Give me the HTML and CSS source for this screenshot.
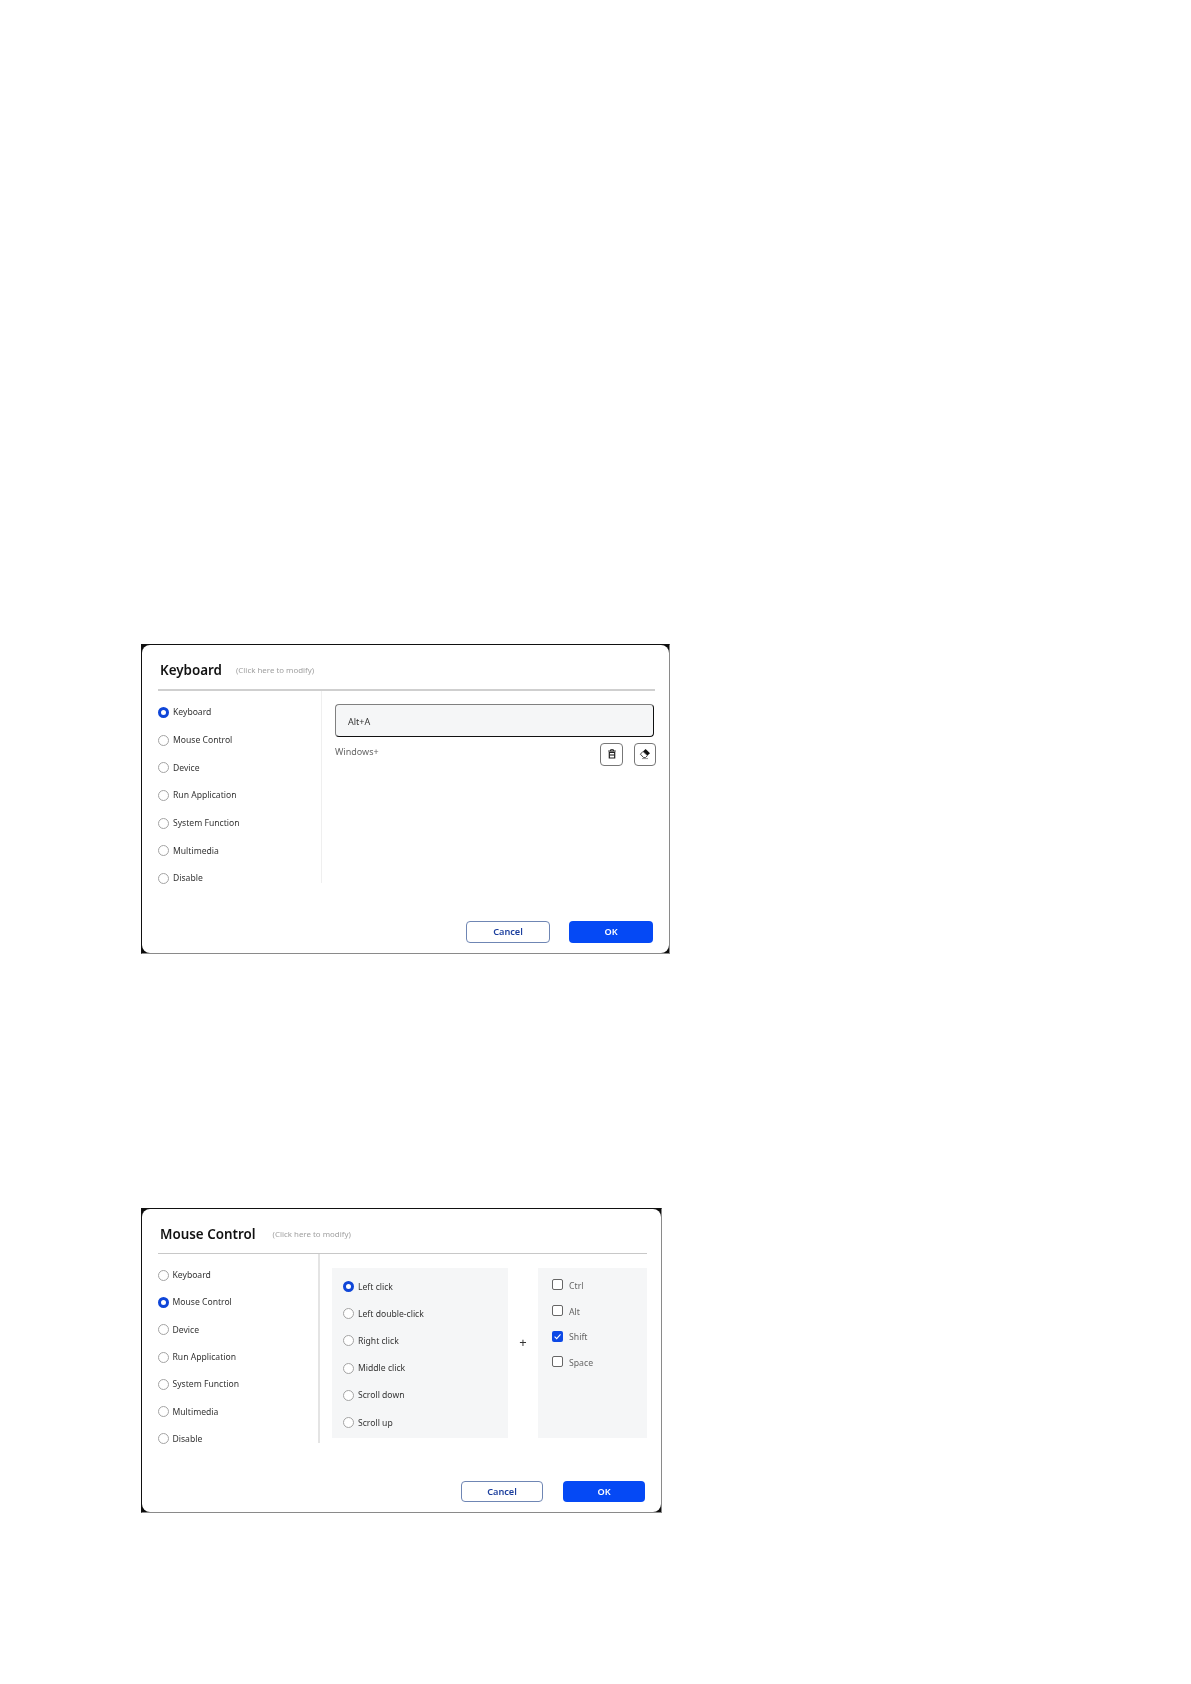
FILE: index.html
```html
<!DOCTYPE html>
<html lang="en">
<head>
<meta charset="utf-8">
<title>Keyboard and Mouse Control</title>
<link rel="stylesheet" href="styles.css">
</head>
<body>
<main class="page">
  <section class="frame frame-keyboard">
    <div class="dialog">
      <header class="head">
        <h2 class="title">Keyboard</h2>
        <span class="hint">(Click here to modify)</span>
      </header>
      <div class="body">
        <ul class="options nav">
          <li class="option"><i class="radio on"></i>Keyboard</li>
          <li class="option"><i class="radio"></i>Mouse Control</li>
          <li class="option"><i class="radio"></i>Device</li>
          <li class="option"><i class="radio"></i>Run Application</li>
          <li class="option"><i class="radio"></i>System Function</li>
          <li class="option"><i class="radio"></i>Multimedia</li>
          <li class="option"><i class="radio"></i>Disable</li>
        </ul>
        <div class="content">
          <div class="shortcut">Alt+A</div>
          <div class="tools">
            <span class="winkey">Windows+</span>
            <button class="tool" type="button" aria-label="Delete">
              <svg viewBox="0 0 12 12" width="12" height="12"><path d="M2.2 3h7.6M4.6 3V1.7h2.8V3" fill="none" stroke="#222" stroke-width="1"/><path d="M3.3 4.4h5.4V10H3.3z" fill="none" stroke="#222" stroke-width="1.2"/><path d="M3.6 7h4.8" stroke="#222" stroke-width="1.1"/></svg>
            </button>
            <button class="tool tool-erase" type="button" aria-label="Clear">
              <svg viewBox="0 0 12 12" width="12" height="12"><path d="M6.6 1 11 5.2 8.4 7.6 4 3.4z" fill="#111"/><path d="M4 3.4 8.4 7.6 6.4 9.6H4.6L1.4 6.2z" fill="#fff" stroke="#333" stroke-width=".9"/><path d="M3 10.6h6" stroke="#777" stroke-width=".8"/></svg>
            </button>
          </div>
        </div>
      </div>
      <footer class="foot">
        <button class="btn btn-ghost" type="button">Cancel</button>
        <button class="btn btn-primary" type="button">OK</button>
      </footer>
    </div>
  </section>

  <section class="frame frame-mouse">
    <div class="dialog">
      <header class="head">
        <h2 class="title">Mouse Control</h2>
        <span class="hint">(Click here to modify)</span>
      </header>
      <div class="body">
        <ul class="options nav">
          <li class="option"><i class="radio"></i>Keyboard</li>
          <li class="option"><i class="radio on"></i>Mouse Control</li>
          <li class="option"><i class="radio"></i>Device</li>
          <li class="option"><i class="radio"></i>Run Application</li>
          <li class="option"><i class="radio"></i>System Function</li>
          <li class="option"><i class="radio"></i>Multimedia</li>
          <li class="option"><i class="radio"></i>Disable</li>
        </ul>
        <div class="content">
          <ul class="options panel clicks">
            <li class="option"><i class="radio on"></i>Left click</li>
            <li class="option"><i class="radio"></i>Left double-click</li>
            <li class="option"><i class="radio"></i>Right click</li>
            <li class="option"><i class="radio"></i>Middle click</li>
            <li class="option"><i class="radio"></i>Scroll down</li>
            <li class="option"><i class="radio"></i>Scroll up</li>
          </ul>
          <div class="plus">+</div>
          <ul class="options panel keys">
            <li class="option check-row"><i class="check"></i>Ctrl</li>
            <li class="option check-row"><i class="check"></i>Alt</li>
            <li class="option check-row"><i class="check on"><svg viewBox="0 0 11 11" width="11" height="11"><path d="M2.6 5.6 4.7 7.6 8.5 3.4" fill="none" stroke="#fff" stroke-width="1.1"/></svg></i>Shift</li>
            <li class="option check-row"><i class="check"></i>Space</li>
          </ul>
        </div>
      </div>
      <footer class="foot">
        <button class="btn btn-ghost" type="button">Cancel</button>
        <button class="btn btn-primary" type="button">OK</button>
      </footer>
    </div>
  </section>
</main>
</body>
</html>
```
FILE: styles.css
```css
* { box-sizing: border-box; }
html, body { margin: 0; padding: 0; background: #fff; }
body { font-family: "Noto Sans", "Liberation Sans", sans-serif; color: #333; }
.page { min-height: 1684px; padding: 644px 0 0 141px; }

.frame {
  background: #0c0c0c;
  border-style: solid;
  border-width: 1px;
  border-color: #111 #8a8a8a #8a8a8a #111;
  filter: blur(0.3px);
}
.frame-keyboard { width: 529px; height: 310px; }
.frame-mouse { width: 521px; height: 305px; margin-top: 254px; }

.dialog {
  height: 100%;
  background: #fff;
  border-radius: 8px;
  padding-left: 16px;
}
.frame-keyboard .dialog { padding-right: 13px; }
.frame-mouse .dialog { padding-right: 14px; }

.head { display: flex; align-items: center; padding-top: 5px; }
.frame-keyboard .head { height: 46px; border-bottom: 2px solid #cfcfcf; margin-right: 1px; gap: 14px; }
.frame-mouse .head { height: 45px; border-bottom: 1px solid #c8c8c8; gap: 17px; }
.title { margin: 0 0 0 2px; font-size: 13.4px; line-height: 20px; font-weight: 600; color: #111; }
.hint { font-size: 7.9px; line-height: 12px; color: #a0a0a0; }

.body { display: flex; }
.frame-keyboard .body { height: 192px; }
.frame-mouse .body { height: 189px; }

.options { list-style: none; margin: 0; padding: 0; }
.option { display: flex; align-items: center; gap: 4px; font-size: 8.6px; color: #333; }
.nav { padding-top: 7.5px; flex: none; }
.frame-keyboard .nav { width: 164px; border-right: 1px solid #efefef; }
.frame-mouse .nav { width: 162px; border-right: 2px solid #e4e4e4; }
.frame-keyboard .option { height: 27.7px; }
.frame-mouse .nav .option { height: 27.3px; gap: 3.5px; }

.radio {
  flex: none;
  width: 11px;
  height: 11px;
  border: 1px solid #a4a4a4;
  border-radius: 50%;
  background: #fff;
}
.radio.on { border: 3px solid #0f46d8; }

.content { flex: 1; display: flex; }
.frame-keyboard .content { flex-direction: column; padding: 13px 0 0 13px; }
.frame-mouse .content { padding: 14px 0 0 12px; }

.shortcut {
  width: 319px;
  height: 33px;
  padding: 2px 0 0 12px;
  display: flex;
  align-items: center;
  font-size: 9px;
  color: #333;
  background: #f5f6f7;
  border: 1px solid #808080;
  border-right-color: #111;
  border-bottom-color: #111;
  border-radius: 4px;
}
.tools { display: flex; width: 321px; margin-top: 6px; }
.winkey { flex: 1; font-size: 9px; line-height: 12px; color: #666; padding-top: 3px; }
.tool {
  width: 23px;
  height: 23px;
  padding: 0;
  display: flex;
  align-items: center;
  justify-content: center;
  background: #fff;
  border: 1px solid #777;
  border-radius: 4px;
}
.tool svg { margin-top: -2px; }
.tool-erase { width: 22px; margin-left: 11px; }

.panel { background: #f5f6f7; height: 170px; flex: none; }
.clicks { width: 176px; padding: 5px 0 0 11px; }
.clicks .option { height: 27.2px; color: #333; }
.plus { width: 30px; flex: none; height: 148px; display: flex; align-items: center; justify-content: center; font-size: 13px; color: #333; }
.keys { width: 109px; padding: 5px 0 0 14px; }
.check-row { height: 25.7px; gap: 6px; color: #666; font-size: 8.7px; }
.check {
  flex: none;
  width: 11px;
  height: 11px;
  border: 1px solid #666;
  border-radius: 2px;
  background: #fff;
  display: flex;
  margin-top: -2px;
}
.check.on { background: #0c48e6; border: none; }

.foot { display: flex; justify-content: flex-end; margin-top: 38px; }
.frame-keyboard .foot { gap: 19px; padding-right: 3px; }
.frame-mouse .foot { gap: 20px; padding-right: 2px; }
.btn {
  font: 600 9.2px "Noto Sans", "Liberation Sans", sans-serif;
  border-radius: 4px;
  padding: 0 0 1px;
}
.frame-keyboard .btn { width: 84px; height: 22px; }
.frame-mouse .btn { width: 82px; height: 21px; }
.btn-ghost { background: #fff; color: #1c3f9e; border: 1px solid #6f86b4; }
.btn-primary { background: #0549f5; color: #fff; border: none; }
```
